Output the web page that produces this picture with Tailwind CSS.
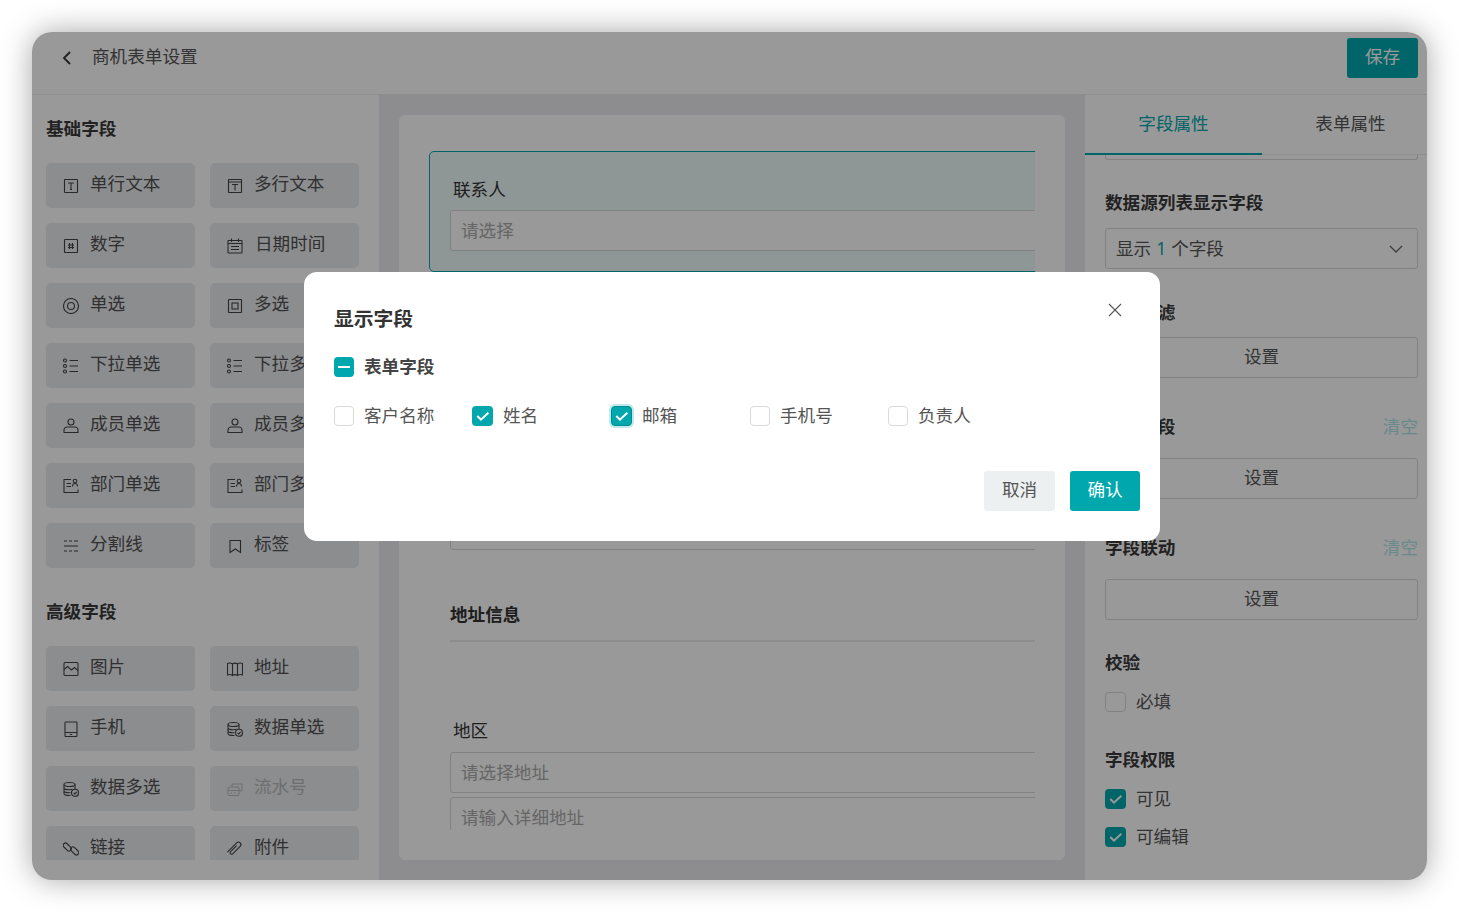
<!DOCTYPE html>
<html lang="zh-CN">
<head>
<meta charset="utf-8">
<title>商机表单设置</title>
<script src="https://cdn.jsdelivr.net/npm/@tailwindcss/browser@4"></script>
</head>
<body class="bg-white">
<div class="w-[1459px] h-[912px] p-[32px] font-['Noto_Sans_CJK_SC','Noto_Sans',sans-serif] text-[17.6px] text-[#555]">
  <div class="relative w-[1395px] h-[848px] rounded-[20px] bg-white flex flex-col shadow-[0_0_30px_rgba(0,0,0,0.35)] overflow-hidden">
    <!-- header -->
    <header class="h-[63px] shrink-0 border-b border-[#eeeeee] pb-[11px] pr-[9px] flex items-center justify-between">
      <div class="flex items-center">
        <svg class="ml-[27px] w-[16px] h-[16px]" viewBox="0 0 16 16" fill="none" stroke="#333" stroke-width="1.8"><path d="M11 2 5 8l6 6"/></svg>
        <span class="ml-[17px] leading-[24px] -mt-[3px]">商机表单设置</span>
      </div>
      <button class="w-[71px] h-[40px] rounded-[3px] bg-[#00a8ae] text-white pb-[2px]">保存</button>
    </header>
    <div class="flex-1 flex min-h-0">
      <!-- left -->
      <aside class="w-[347px] shrink-0 pb-[20px] flex flex-col">
        <div class="overflow-hidden flex-1 px-[14px] pt-[22px] text-[#505050]">
          <h3 class="font-bold text-[#3a3a3a] h-[24px] leading-[22px] mb-[22px]">基础字段</h3>
          <div class="grid grid-cols-[149px_149px] gap-x-[15px] gap-y-[15px] [&_span]:-mt-[4px]">
            <div class="h-[45px] rounded-[5px] bg-[#eaebee] flex items-center pl-[17px] gap-[11px]"><svg class="w-[16px] h-[16px] shrink-0" viewBox="0 0 16 16" fill="none" stroke="#444" stroke-width="1.100"><rect x="1.500" y="1.500" width="13" height="13" rx=".5"/><path d="M5 5h6M8 5v6.500M7 11.500h2"/></svg><span>单行文本</span></div>
            <div class="h-[45px] rounded-[5px] bg-[#eaebee] flex items-center pl-[17px] gap-[11px]"><svg class="w-[16px] h-[16px] shrink-0" viewBox="0 0 16 16" fill="none" stroke="#444" stroke-width="1.100"><rect x="1.500" y="1.500" width="13" height="13" rx=".5"/><path d="M1.500 4h13M5 6.500h6M8 6.500v6"/></svg><span>多行文本</span></div>
            <div class="h-[45px] rounded-[5px] bg-[#eaebee] flex items-center pl-[17px] gap-[11px]"><svg class="w-[16px] h-[16px] shrink-0" viewBox="0 0 16 16" fill="none" stroke="#444" stroke-width="1.100"><rect x="1.500" y="1.500" width="13" height="13" rx=".5"/><path d="M6.500 5v6M9.500 5v6M5 7h6M5 9.500h6"/></svg><span>数字</span></div>
            <div class="h-[45px] rounded-[5px] bg-[#eaebee] flex items-center pl-[17px] gap-[12px]"><svg class="w-[16px] h-[16px] shrink-0" viewBox="0 0 16 16" fill="none" stroke="#444" stroke-width="1.100"><rect x="1" y="2.500" width="14" height="12.500" rx=".5"/><path d="M4.500 .5v3.500M11.500 .5v3.500M1 5.500h14M4 8.500h8M4 11.500h8"/></svg><span>日期时间</span></div>
            <div class="h-[45px] rounded-[5px] bg-[#eaebee] flex items-center pl-[17px] gap-[11px]"><svg class="w-[16px] h-[16px] shrink-0" viewBox="0 0 16 16" fill="none" stroke="#444" stroke-width="1.100"><circle cx="8" cy="8" r="7.500"/><circle cx="8" cy="8" r="3.500"/></svg><span>单选</span></div>
            <div class="h-[45px] rounded-[5px] bg-[#eaebee] flex items-center pl-[17px] gap-[11px]"><svg class="w-[16px] h-[16px] shrink-0" viewBox="0 0 16 16" fill="none" stroke="#444" stroke-width="1.100"><rect x="1.500" y="1.500" width="13" height="13" rx=".5"/><rect x="5" y="5" width="6" height="6"/></svg><span>多选</span></div>
            <div class="h-[45px] rounded-[5px] bg-[#eaebee] flex items-center pl-[17px] gap-[11px]"><svg class="w-[16px] h-[16px] shrink-0" viewBox="0 0 16 16" fill="none" stroke="#444" stroke-width="1.100"><circle cx="2" cy="2.500" r="1.500"/><circle cx="2" cy="8" r="1.500"/><circle cx="2" cy="13.500" r="1.500"/><path d="M6.500 2.500H15M6.500 8H15M6.500 13.500H15"/></svg><span>下拉单选</span></div>
            <div class="h-[45px] rounded-[5px] bg-[#eaebee] flex items-center pl-[17px] gap-[11px]"><svg class="w-[16px] h-[16px] shrink-0" viewBox="0 0 16 16" fill="none" stroke="#444" stroke-width="1.100"><circle cx="2" cy="2.500" r="1.500"/><circle cx="2" cy="8" r="1.500"/><circle cx="2" cy="13.500" r="1.500"/><path d="M6.500 2.500H15M6.500 8H15M6.500 13.500H15"/></svg><span class="whitespace-nowrap">下拉多选</span></div>
            <div class="h-[45px] rounded-[5px] bg-[#eaebee] flex items-center pl-[17px] gap-[11px]"><svg class="w-[16px] h-[16px] shrink-0" viewBox="0 0 16 16" fill="none" stroke="#444" stroke-width="1.100"><circle cx="8" cy="4" r="3"/><path d="M1 14.500v-2.500c0-1.500 1.500-3 3-3h8c1.500 0 3 1.500 3 3v2.500z"/></svg><span>成员单选</span></div>
            <div class="h-[45px] rounded-[5px] bg-[#eaebee] flex items-center pl-[17px] gap-[11px]"><svg class="w-[16px] h-[16px] shrink-0" viewBox="0 0 16 16" fill="none" stroke="#444" stroke-width="1.100"><circle cx="8" cy="4" r="3"/><path d="M1 14.500v-2.500c0-1.500 1.500-3 3-3h8c1.500 0 3 1.500 3 3v2.500z"/></svg><span class="whitespace-nowrap">成员多选</span></div>
            <div class="h-[45px] rounded-[5px] bg-[#eaebee] flex items-center pl-[17px] gap-[11px]"><svg class="w-[16px] h-[16px] shrink-0" viewBox="0 0 16 16" fill="none" stroke="#444" stroke-width="1.100"><path d="M8 1.500H1v13h14v-3M3.500 5.500H8M3.500 8.500H8"/><circle cx="12" cy="3" r="1.800"/><path d="M9.500 8.500c0-2 1-3 2.500-3s2.500 1 2.500 3"/></svg><span>部门单选</span></div>
            <div class="h-[45px] rounded-[5px] bg-[#eaebee] flex items-center pl-[17px] gap-[11px]"><svg class="w-[16px] h-[16px] shrink-0" viewBox="0 0 16 16" fill="none" stroke="#444" stroke-width="1.100"><path d="M8 1.500H1v13h14v-3M3.500 5.500H8M3.500 8.500H8"/><circle cx="12" cy="3" r="1.800"/><path d="M9.500 8.500c0-2 1-3 2.500-3s2.500 1 2.500 3"/></svg><span class="whitespace-nowrap">部门多选</span></div>
            <div class="h-[45px] rounded-[5px] bg-[#eaebee] flex items-center pl-[17px] gap-[11px]"><svg class="w-[16px] h-[16px] shrink-0" viewBox="0 0 16 16" fill="none" stroke="#444" stroke-width="1.100"><path d="M1 3h3M6 3h3M11 3h4M1 8h14M1 13h3M6 13h3M11 13h4"/></svg><span>分割线</span></div>
            <div class="h-[45px] rounded-[5px] bg-[#eaebee] flex items-center pl-[17px] gap-[11px]"><svg class="w-[16px] h-[16px] shrink-0" viewBox="0 0 16 16" fill="none" stroke="#444" stroke-width="1.100"><path d="M3 2.500h10.500v12L8.300 11 3 14.500z"/></svg><span>标签</span></div>
          </div>
          <h3 class="font-bold text-[#3a3a3a] h-[24px] leading-[22px] mt-[32px] mb-[22px]">高级字段</h3>
          <div class="grid grid-cols-[149px_149px] gap-x-[15px] gap-y-[15px] [&_span]:-mt-[4px]">
            <div class="h-[45px] rounded-[5px] bg-[#eaebee] flex items-center pl-[17px] gap-[11px]"><svg class="w-[16px] h-[16px] shrink-0" viewBox="0 0 16 16" fill="none" stroke="#444" stroke-width="1.100"><rect x="1" y="1.500" width="14" height="13" rx="1"/><path d="M1 8.500 4.500 5.500 8.500 9 11.500 6.500 15 9.500"/></svg><span>图片</span></div>
            <div class="h-[45px] rounded-[5px] bg-[#eaebee] flex items-center pl-[17px] gap-[11px]"><svg class="w-[16px] h-[16px] shrink-0" viewBox="0 0 16 16" fill="none" stroke="#444" stroke-width="1.100"><path d="M.5 2.500c1.800-.8 3.500-.6 5 .5 1.500-1 3.500-1 5 0 1.500-1.100 3.200-1.300 5-.5v11.500c-1.800-.8-3.500-.6-5 .5-1.500-1-3.500-1-5 0-1.500-1.100-3.200-1.300-5-.5zM5.500 3v11.500M10.500 3v11.500"/></svg><span>地址</span></div>
            <div class="h-[45px] rounded-[5px] bg-[#eaebee] flex items-center pl-[17px] gap-[11px]"><svg class="w-[16px] h-[16px] shrink-0" viewBox="0 0 16 16" fill="none" stroke="#444" stroke-width="1.100"><rect x="2" y="1" width="12" height="14.500" rx=".8"/><path d="M2 11.500h12M6.800 13.500h2.400"/></svg><span>手机</span></div>
            <div class="h-[45px] rounded-[5px] bg-[#eaebee] flex items-center pl-[17px] gap-[11px]"><svg class="w-[16px] h-[16px] shrink-0" viewBox="0 0 16 16" fill="none" stroke="#444" stroke-width="1.100"><ellipse cx="6.500" cy="3.500" rx="5.500" ry="2"/><path d="M1 3.500v9c0 1.200 2.500 2 5.500 2h1M1 6.700c0 1.100 2.500 2 5.500 2 1 0 2-.1 3-.4M1 9.800c0 1.100 2.500 2 5.500 2h1M12 3.500v4.500"/><circle cx="12" cy="11.800" r="3.500"/><path d="m10.500 11.800 1.200 1.200 2-2"/></svg><span>数据单选</span></div>
            <div class="h-[45px] rounded-[5px] bg-[#eaebee] flex items-center pl-[17px] gap-[11px]"><svg class="w-[16px] h-[16px] shrink-0" viewBox="0 0 16 16" fill="none" stroke="#444" stroke-width="1.100"><ellipse cx="6.500" cy="3.500" rx="5.500" ry="2"/><path d="M1 3.500v9c0 1.200 2.500 2 5.500 2h1M1 6.700c0 1.100 2.500 2 5.500 2 1 0 2-.1 3-.4M1 9.800c0 1.100 2.500 2 5.500 2h1M12 3.500v4.500"/><circle cx="12" cy="11.800" r="3.500"/><path d="m10.500 11.800 1.200 1.200 2-2"/></svg><span>数据多选</span></div>
            <div class="h-[45px] rounded-[5px] bg-[#eaebee] text-[#b8b9bb] flex items-center pl-[17px] gap-[11px]"><svg class="w-[16px] h-[16px] shrink-0" viewBox="0 0 16 16" fill="none" stroke="currentColor"><rect x="1" y="6" width="11" height="8.500" rx="1"/><path d="M5 6V3h10v7h-3M1 9.500h11M3.500 12h1.500M7 12h1.500"/></svg><span>流水号</span></div>
            <div class="h-[45px] rounded-[5px] bg-[#eaebee] flex items-center pl-[17px] gap-[11px]"><svg class="w-[16px] h-[16px] shrink-0" viewBox="0 0 16 16" fill="none" stroke="#444" stroke-width="1.100"><rect x="-.5" y="3.800" width="9.500" height="4.600" rx="2.300" transform="rotate(45 4.250 6.100)"/><rect x="7" y="7.600" width="9.500" height="4.600" rx="2.300" transform="rotate(45 11.750 9.900)"/></svg><span>链接</span></div>
            <div class="h-[45px] rounded-[5px] bg-[#eaebee] flex items-center pl-[17px] gap-[11px]"><svg class="w-[16px] h-[16px] shrink-0" viewBox="0 0 16 16" fill="none" stroke="#444" stroke-width="1.100"><g transform="rotate(45 8 8)"><path d="M6.800 4.500v8.500a1.500 1.500 0 0 0 3 0V2.500a2.500 2.500 0 0 0-5 0v13"/></g></svg><span>附件</span></div>
          </div>
        </div>
      </aside>
      <!-- center -->
      <main class="w-[706px] shrink-0 bg-[#ebecef] p-[20px]">
        <div class="h-[745px] bg-white rounded-[6px] px-[30px] pt-[36px] pb-[30px]">
          <div class="h-full overflow-hidden">
            <div class="w-[700px]">
              <div class="h-[121px] border border-[#00a8ae] rounded-[5px] bg-[#eefcfa] pl-[20px] pt-[25px]">
                <div class="ml-[3px] leading-[24px] text-[#333]">联系人</div>
                <div class="mt-[9px] h-[41px] border border-[#d9d9d9] rounded-[3px] bg-white pl-[10px] leading-[37px] text-[#aaa]">请选择</div>
              </div>
              <div class="ml-[21px] mt-[237px] h-[41px] border border-[#d9d9d9] rounded-[3px]"></div>
              <div class="ml-[21px] mt-[53px] font-bold h-[24px] leading-[22px] text-[#333]">地址信息</div>
              <div class="ml-[21px] mt-[13px] h-[2px] bg-[#e9e9e9]"></div>
              <div class="ml-[24px] mt-[77px] h-[24px] leading-[22px] text-[#333]">地区</div>
              <div class="ml-[21px] mt-[9px] h-[41px] border border-[#d9d9d9] rounded-[3px] pl-[10px] leading-[37px] text-[#aaa]">请选择地址</div>
              <div class="ml-[21px] mt-[4px] h-[41px] border border-[#d9d9d9] rounded-[3px] pl-[10px] leading-[37px] text-[#aaa]">请输入详细地址</div>
            </div>
          </div>
        </div>
      </main>
      <!-- right -->
      <aside class="flex-1 min-w-0">
        <div class="h-[60px] flex border-b border-[#eeeeee] relative">
          <div class="w-[177px] shrink-0 h-[60px] border-b-2 border-[#00a8ae] text-[#00a8ae] flex items-center justify-center pb-[2px]">字段属性</div>
          <div class="w-[177px] shrink-0 flex items-center justify-center pb-[2px]">表单属性</div>
        </div>
        <div class="pl-[20px] pr-[9px]">
          <div class="h-[5px] border border-t-0 border-[#d9d9d9] rounded-b-[3px]"></div>
          <div class="mt-[31px] font-bold h-[24px] leading-[22px] text-[#3a3a3a]">数据源列表显示字段</div>
          <div class="mt-[13px] h-[41px] border border-[#d9d9d9] rounded-[3px] pl-[10px] pr-[13px] flex items-center justify-between"><span class="-mt-[1px]">显示 <span class="text-[#00a8ae] font-['Noto_Sans'] mx-[1px]">1</span> 个字段</span><svg class="w-[16px] h-[16px]" viewBox="0 0 16 16" fill="none" stroke="#666" stroke-width="1.300"><path d="m2 5 6 6 6-6"/></svg></div>
          <div class="mt-[31px] font-bold leading-[24px] text-[#3a3a3a]">数据过滤</div>
          <button class="block w-full mt-[13px] h-[41px] border border-[#d9d9d9] rounded-[3px] pb-[2px]">设置</button>
          <div class="mt-[37px] flex justify-between h-[24px] leading-[22px]"><span class="font-bold text-[#3a3a3a]">默认字段</span><span class="text-[#aee6e8]">清空</span></div>
          <button class="block w-full mt-[19px] h-[41px] border border-[#d9d9d9] rounded-[3px] pb-[2px]">设置</button>
          <div class="mt-[37px] flex justify-between h-[24px] leading-[22px]"><span class="font-bold text-[#3a3a3a]">字段联动</span><span class="text-[#aee6e8]">清空</span></div>
          <button class="block w-full mt-[19px] h-[41px] border border-[#d9d9d9] rounded-[3px] pb-[2px]">设置</button>
          <div class="mt-[31px] font-bold h-[24px] leading-[22px] text-[#3a3a3a]">校验</div>
          <div class="mt-[17px] h-[20px] flex items-center gap-[10px]"><span class="w-[21px] h-[20px] border border-[#d9d9d9] rounded-[4px]"></span><span class="-mt-[1px]">必填</span></div>
          <div class="mt-[36px] font-bold h-[24px] leading-[22px] text-[#3a3a3a]">字段权限</div>
          <div class="mt-[17px] h-[20px] flex items-center gap-[10px]"><span class="w-[21px] h-[20px] rounded-[4px] bg-[#00a8ae] flex items-center justify-center"><svg class="w-[16px] h-[16px]" viewBox="0 0 14 14" fill="none" stroke="#fff" stroke-width="1.800"><path d="m2 7 3.200 3.200 6.500-6"/></svg></span><span class="-mt-[1px]">可见</span></div>
          <div class="mt-[18px] h-[20px] flex items-center gap-[10px]"><span class="w-[21px] h-[20px] rounded-[4px] bg-[#00a8ae] flex items-center justify-center"><svg class="w-[16px] h-[16px]" viewBox="0 0 14 14" fill="none" stroke="#fff" stroke-width="1.800"><path d="m2 7 3.200 3.200 6.500-6"/></svg></span><span class="-mt-[1px]">可编辑</span></div>
        </div>
      </aside>
    </div>
    <!-- overlay -->
    <div class="absolute inset-0 bg-black/40"></div>
    <!-- modal -->
    <div class="absolute left-[272px] top-[240px] w-[856px] h-[269px] bg-white rounded-[13px] pl-[30px] pr-[20px] pt-[33px] pb-[30px] flex flex-col">
      <svg class="absolute right-[38px] top-[31px] w-[14px] h-[14px]" viewBox="0 0 14 14" fill="none" stroke="#555" stroke-width="1.100"><path d="m1 1 12 12M13 1 1 13"/></svg>
      <h2 class="font-bold text-[19.800px] h-[28px] leading-[26px] text-[#333]">显示字段</h2>
      <div class="mt-[24px] h-[20px] flex items-center gap-[10px]">
        <span class="w-[20px] h-[20px] rounded-[4px] bg-[#00a8ae] flex items-center justify-center"><span class="w-[12px] h-[2px] bg-white"></span></span>
        <span class="font-bold text-[#444] -mt-[2px]">表单字段</span>
      </div>
      <div class="mt-[29px] grid grid-cols-[138px_139px_139px_138px_138px] grid-rows-[20px]">
        <div class="flex items-center gap-[10px]"><span class="w-[20px] h-[20px] border border-[#d9d9d9] rounded-[4px]"></span><span class="-mt-[1px]">客户名称</span></div>
        <div class="flex items-center gap-[10px]"><span class="w-[21px] h-[20px] rounded-[4px] bg-[#00a8ae] flex items-center justify-center"><svg class="w-[16px] h-[16px]" viewBox="0 0 14 14" fill="none" stroke="#fff" stroke-width="1.800"><path d="m2 7 3.200 3.200 6.500-6"/></svg></span><span class="-mt-[1px]">姓名</span></div>
        <div class="flex items-center gap-[10px]"><span class="w-[21px] h-[20px] rounded-[4px] bg-[#00a8ae] border border-[#008c92] shadow-[0_0_0_2px_rgba(0,168,174,0.25)] flex items-center justify-center"><svg class="w-[16px] h-[16px]" viewBox="0 0 14 14" fill="none" stroke="#fff" stroke-width="1.800"><path d="m2 7 3.200 3.200 6.500-6"/></svg></span><span class="-mt-[1px]">邮箱</span></div>
        <div class="flex items-center gap-[10px]"><span class="w-[20px] h-[20px] border border-[#d9d9d9] rounded-[4px]"></span><span class="-mt-[1px]">手机号</span></div>
        <div class="flex items-center gap-[10px]"><span class="w-[20px] h-[20px] border border-[#d9d9d9] rounded-[4px]"></span><span class="-mt-[1px]">负责人</span></div>
      </div>
      <div class="mt-auto flex justify-end gap-[15px]">
        <button class="w-[71px] h-[40px] rounded-[3px] bg-[#edf0f1] text-[#555] pb-[3px]">取消</button>
        <button class="w-[70px] h-[40px] rounded-[3px] bg-[#00a8ae] text-white pb-[3px]">确认</button>
      </div>
    </div>
  </div>
</div>
</body>
</html>
